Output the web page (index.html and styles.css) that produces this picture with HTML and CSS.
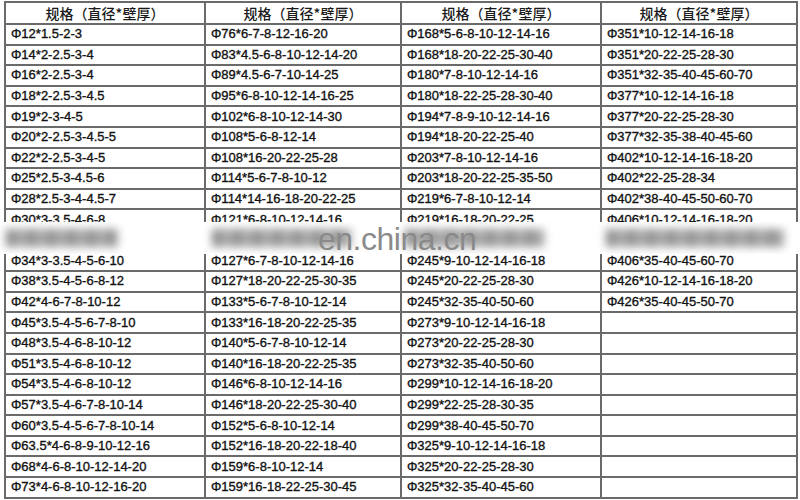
FILE: index.html
```html
<!DOCTYPE html>
<html lang="zh">
<head>
<meta charset="utf-8">
<title>规格</title>
<link rel="stylesheet" href="styles.css">
</head>
<body>
<div class="sheet">
<table class="spec">
<colgroup><col class="c1"><col class="c2"><col class="c3"><col class="c4"></colgroup>
<thead>
<tr><th>规格（直径*壁厚）</th><th>规格（直径*壁厚）</th><th>规格（直径*壁厚）</th><th>规格（直径*壁厚）</th></tr>
</thead>
<tbody>
<tr><td>Φ12*1.5-2-3</td><td>Φ76*6-7-8-12-16-20</td><td>Φ168*5-6-8-10-12-14-16</td><td>Φ351*10-12-14-16-18</td></tr>
<tr><td>Φ14*2-2.5-3-4</td><td>Φ83*4.5-6-8-10-12-14-20</td><td>Φ168*18-20-22-25-30-40</td><td>Φ351*20-22-25-28-30</td></tr>
<tr><td>Φ16*2-2.5-3-4</td><td>Φ89*4.5-6-7-10-14-25</td><td>Φ180*7-8-10-12-14-16</td><td>Φ351*32-35-40-45-60-70</td></tr>
<tr><td>Φ18*2-2.5-3-4.5</td><td>Φ95*6-8-10-12-14-16-25</td><td>Φ180*18-22-25-28-30-40</td><td>Φ377*10-12-14-16-18</td></tr>
<tr><td>Φ19*2-3-4-5</td><td>Φ102*6-8-10-12-14-30</td><td>Φ194*7-8-9-10-12-14-16</td><td>Φ377*20-22-25-28-30</td></tr>
<tr><td>Φ20*2-2.5-3-4.5-5</td><td>Φ108*5-6-8-12-14</td><td>Φ194*18-20-22-25-40</td><td>Φ377*32-35-38-40-45-60</td></tr>
<tr><td>Φ22*2-2.5-3-4-5</td><td>Φ108*16-20-22-25-28</td><td>Φ203*7-8-10-12-14-16</td><td>Φ402*10-12-14-16-18-20</td></tr>
<tr><td>Φ25*2.5-3-4.5-6</td><td>Φ114*5-6-7-8-10-12</td><td>Φ203*18-20-22-25-35-50</td><td>Φ402*22-25-28-34</td></tr>
<tr><td>Φ28*2.5-3-4-4.5-7</td><td>Φ114*14-16-18-20-22-25</td><td>Φ219*6-7-8-10-12-14</td><td>Φ402*38-40-45-50-60-70</td></tr>
<tr><td>Φ30*3-3.5-4-6-8</td><td>Φ121*6-8-10-12-14-16</td><td>Φ219*16-18-20-22-25</td><td>Φ406*10-12-14-16-18-20</td></tr>
<tr class="hidden-row"><td></td><td></td><td></td><td></td></tr>
<tr><td>Φ34*3-3.5-4-5-6-10</td><td>Φ127*6-7-8-10-12-14-16</td><td>Φ245*9-10-12-14-16-18</td><td>Φ406*35-40-45-60-70</td></tr>
<tr><td>Φ38*3.5-4-5-6-8-12</td><td>Φ127*18-20-22-25-30-35</td><td>Φ245*20-22-25-28-30</td><td>Φ426*10-12-14-16-18-20</td></tr>
<tr><td>Φ42*4-6-7-8-10-12</td><td>Φ133*5-6-7-8-10-12-14</td><td>Φ245*32-35-40-50-60</td><td>Φ426*35-40-45-50-70</td></tr>
<tr><td>Φ45*3.5-4-5-6-7-8-10</td><td>Φ133*16-18-20-22-25-35</td><td>Φ273*9-10-12-14-16-18</td><td></td></tr>
<tr><td>Φ48*3.5-4-6-8-10-12</td><td>Φ140*5-6-7-8-10-12-14</td><td>Φ273*20-22-25-28-30</td><td></td></tr>
<tr><td>Φ51*3.5-4-6-8-10-12</td><td>Φ140*16-18-20-22-25-35</td><td>Φ273*32-35-40-50-60</td><td></td></tr>
<tr><td>Φ54*3.5-4-6-8-10-12</td><td>Φ146*6-8-10-12-14-16</td><td>Φ299*10-12-14-16-18-20</td><td></td></tr>
<tr><td>Φ57*3.5-4-6-7-8-10-14</td><td>Φ146*18-20-22-25-30-40</td><td>Φ299*22-25-28-30-35</td><td></td></tr>
<tr><td>Φ60*3.5-4-5-6-7-8-10-14</td><td>Φ152*5-6-8-10-12-14</td><td>Φ299*38-40-45-50-70</td><td></td></tr>
<tr><td>Φ63.5*4-6-8-9-10-12-16</td><td>Φ152*16-18-20-22-18-40</td><td>Φ325*9-10-12-14-16-18</td><td></td></tr>
<tr><td>Φ68*4-6-8-10-12-14-20</td><td>Φ159*6-8-10-12-14</td><td>Φ325*20-22-25-28-30</td><td></td></tr>
<tr><td>Φ73*4-6-8-10-12-16-20</td><td>Φ159*16-18-22-25-30-45</td><td>Φ325*32-35-40-45-60</td><td></td></tr>
</tbody>
</table>
<div class="band">
  <div class="smears">
    <i class="smear s1"></i>
    <i class="smear s2"></i>
    <i class="smear s3"></i>
    <i class="smear s4"></i>
  </div>
  <span class="mark">en.china.cn</span>
</div>
</div>
</body>
</html>
```
FILE: styles.css
```css
html, body {
  margin: 0;
  padding: 0;
  background: #ffffff;
}

body {
  width: 800px;
  height: 500px;
  overflow: hidden;
  font-family: "Liberation Sans", Arial, sans-serif;
  color: #111111;
}

.sheet {
  position: relative;
  width: 800px;
  height: 500px;
  padding: 1px 0 0 4px;
  box-sizing: border-box;
}

.spec {
  width: 792px;
  table-layout: fixed;
  border-collapse: collapse;
  border: 2px solid #5e5e5e;
}

.c1 { width: 200px; }
.c2 { width: 196px; }
.c3 { width: 200px; }
.c4 { width: 196px; }

.spec th,
.spec td {
  border: 2px solid #6a6a6a;
  padding: 0 0 0 5px;
  white-space: nowrap;
  overflow: hidden;
}

.spec th {
  height: 20px;
  padding: 0;
  text-align: center;
  font-family: "Noto Sans CJK SC", "Noto Sans CJK JP", sans-serif;
  font-weight: 500;
  font-size: 14px;
  line-height: 18px;
  color: #1a1a1a;
}

.spec td {
  height: 18.6px;
  font-size: 13px;
  line-height: 16px;
  vertical-align: middle;
  -webkit-text-stroke: 0.35px #111111;
}

.band {
  position: absolute;
  left: 0;
  top: 222px;
  width: 800px;
  height: 32px;
  background: #ffffff;
}

.smears {
  display: grid;
  grid-template-columns: 204px 196px 200px 200px;
  height: 32px;
  align-items: center;
  overflow: hidden;
}

.smear {
  display: block;
  height: 18px;
  margin-left: 8px;
  background:
    repeating-linear-gradient(90deg, #707070 0 8px, #a0a0a0 8px 11px, #858585 11px 17px, #b8b8b8 17px 20px);
  filter: blur(4px);
  opacity: 0.8;
}

.s1 { width: 112px; margin-left: 6px; }
.s2 { width: 140px; margin-left: 8px; }
.s3 { width: 140px; margin-left: 5px; }
.s4 { width: 178px; margin-left: 6px; }

.mark {
  position: absolute;
  left: 318px;
  top: 5px;
  font-family: "Liberation Sans", Arial, sans-serif;
  font-size: 32px;
  line-height: 25px;
  color: #8a8a8a;
  letter-spacing: -0.5px;
}
```
